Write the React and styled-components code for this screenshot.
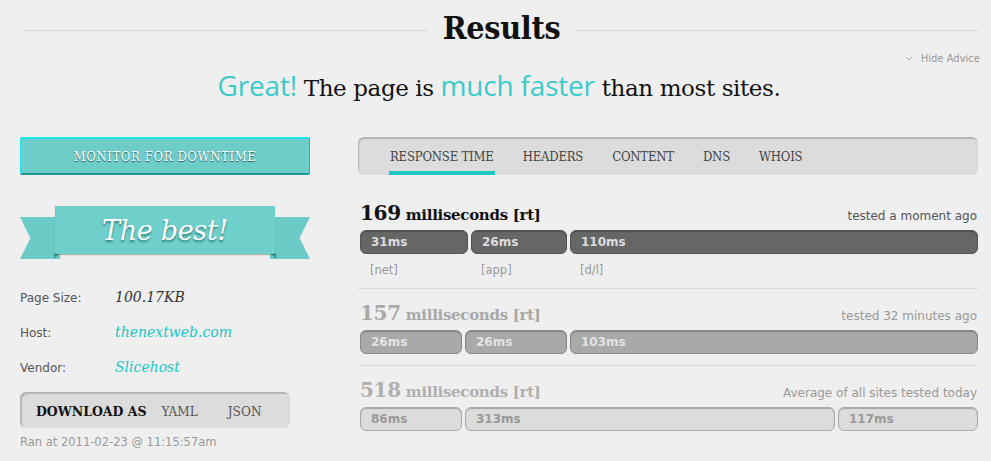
import React from 'react';
import styled, { createGlobalStyle } from 'styled-components';

const GlobalStyle = createGlobalStyle`
  html, body {
    margin: 0;
    padding: 0;
    background: #efefef;
  }
  body {
    font-family: "DejaVu Sans", "Liberation Sans", sans-serif;
    color: #555;
  }
`;

const Page = styled.div`
  width: 991px;
  height: 461px;
  overflow: hidden;
  box-sizing: border-box;
  padding: 0 13px 0 20px;
  background: #efefef;
`;

const TitleRow = styled.div`
  display: flex;
  align-items: center;
  gap: 16px;
  height: 50px;
  padding: 5px 0 0 5px;
  box-sizing: border-box;
`;

const Rule = styled.div`
  flex: 1;
  height: 1px;
  background: #d6d6d6;
  margin-top: 6px;
`;

const Title = styled.h1`
  margin: 0;
  font-family: "DejaVu Serif Condensed", "DejaVu Serif", serif;
  font-weight: bold;
  font-size: 32px;
  color: #111;
  letter-spacing: -0.3px;
`;

const AdviceRow = styled.div`
  display: flex;
  justify-content: flex-end;
  align-items: center;
  gap: 8px;
  height: 14px;
  margin-top: 1px;
  font-size: 10px;
  color: #999;
  margin-right: -2px;
`;

const Tagline = styled.p`
  margin: 2px 0 0;
  line-height: 36px;
  text-align: center;
  font-family: "DejaVu Serif", Georgia, serif;
  font-size: 23px;
  color: #111;
  letter-spacing: -0.4px;
`;

const Accent = styled.span`
  font-family: "Open Sans", "Lato", sans-serif;
  font-size: 28px;
  color: #3ccaca;
  letter-spacing: -0.2px;
`;

const Columns = styled.div`
  display: flex;
  gap: 48px;
  margin-top: 31px;
`;

const Side = styled.div`
  width: 290px;
  display: flex;
  flex-direction: column;
`;

const MonitorButton = styled.button`
  height: 38px;
  width: 100%;
  background: #6fcdc9;
  border: 1px solid #2ab3b0;
  border-top: 2px solid #1de6e6;
  border-left-color: #1de6e6;
  border-bottom: 2px solid #1b9896;
  border-radius: 2px;
  color: #fff;
  font-family: "DejaVu Serif Condensed", "DejaVu Serif", serif;
  font-size: 13px;
  letter-spacing: 0.6px;
  text-shadow: 0 1px 1px rgba(0, 60, 60, 0.8);
  cursor: pointer;
`;

const Ribbon = styled.div`
  display: flex;
  margin-top: 31px;
  height: 54px;
`;

const Tail = styled.div`
  position: relative;
  width: 40px;
  height: 42px;
  margin-top: 11px;
  background: #6ccbc6;
  clip-path: ${p => p.$right
    ? 'polygon(0 0, 100% 0, 74% 50%, 100% 100%, 0 100%)'
    : 'polygon(0 0, 100% 0, 100% 100%, 0 100%, 26% 50%)'};
`;

const Fold = styled.div`
  position: absolute;
  bottom: 0;
  ${p => (p.$right ? 'left: 0;' : 'right: 0;')}
  width: 6px;
  height: 6px;
  background: #3d9a96;
  clip-path: ${p => p.$right
    ? 'polygon(0 0, 100% 0, 100% 100%)'
    : 'polygon(0 0, 100% 0, 0 100%)'};
`;

const Band = styled.div`
  flex: 1;
  height: 48px;
  margin: 0 -5px;
  z-index: 1;
  background: #6fcfca;
  box-shadow: 0 1px 1px rgba(0, 0, 0, 0.25);
  display: flex;
  align-items: center;
  justify-content: center;
  font-family: "DejaVu Serif", Georgia, serif;
  font-style: italic;
  font-size: 27px;
  color: #fff;
  text-shadow: 0 2px 2px rgba(0, 70, 70, 0.55);
  letter-spacing: -0.3px;
`;

const InfoList = styled.dl`
  margin: 27px 0 0;
  display: grid;
  grid-template-columns: 95px 1fr;
  row-gap: 13px;
  align-items: baseline;
`;

const Label = styled.dt`
  font-size: 12px;
  color: #555;
  line-height: 21px;
`;

const Value = styled.dd`
  margin: 0;
  font-family: "DejaVu Serif", Georgia, serif;
  font-style: italic;
  font-size: 14px;
  line-height: 21px;
  color: ${p => (p.$link ? '#1cc6c6' : '#333')};
`;

const DownloadBar = styled.div`
  margin-top: 13px;
  height: 36px;
  width: 270px;
  box-sizing: border-box;
  background: #dcdcdc;
  border-radius: 6px;
  box-shadow: inset 2px 2px 1px rgba(0, 0, 0, 0.18);
  display: flex;
  align-items: center;
  padding: 2px 16px 0;
  white-space: nowrap;
  font-family: "DejaVu Serif Condensed", "DejaVu Serif", serif;
  font-size: 13.5px;
`;

const DownloadLabel = styled.span`
  font-family: "DejaVu Serif", serif;
  font-weight: bold;
  color: #111;
  font-size: 12.5px;
  margin-right: 15px;
`;

const Format = styled.span`
  color: #555;
  margin-right: 30px;
`;

const RanAt = styled.div`
  margin-top: 7px;
  font-size: 11.5px;
  color: #999;
`;

const Main = styled.div`
  flex: 1;
  display: flex;
  flex-direction: column;
`;

const TabBar = styled.div`
  height: 38px;
  box-sizing: border-box;
  background: #dcdcdc;
  border-radius: 6px;
  box-shadow: inset 1px 2px 1px rgba(0, 0, 0, 0.18);
  display: flex;
  align-items: stretch;
  padding: 0 31px;
  gap: 27px;
`;

const Tab = styled.div`
  display: flex;
  align-items: center;
  font-family: "DejaVu Serif Condensed", "DejaVu Serif", serif;
  font-size: 13px;
  color: #444;
  padding: 4px 1px 0;
  border-bottom: 4px solid ${p => (p.$active ? '#1dc8c6' : 'transparent')};
  letter-spacing: -0.2px;
`;

const Result = styled.div`
  padding: ${p => (p.$first ? '26px' : '12px')} 0 11px 2px;
  border-bottom: ${p => (p.$last ? 'none' : '1px solid #dadada')};
  color: ${p => p.$tone};
`;

const ResultHead = styled.div`
  display: flex;
  justify-content: space-between;
  align-items: baseline;
  margin-bottom: 5px;
`;

const Ms = styled.div`
  font-family: "DejaVu Serif", Georgia, serif;
  font-weight: bold;
  font-size: 15px;
  letter-spacing: -0.3px;
`;

const MsNum = styled.span`
  font-size: 20px;
`;

const When = styled.span`
  font-size: 12px;
  color: ${p => p.$color};
  margin-right: 1px;
`;

const Bars = styled.div`
  display: flex;
  gap: 3px;
`;

const Segment = styled.div`
  flex: ${p => p.$grow} 1 0;
  min-width: 0;
  height: 24px;
  box-sizing: border-box;
  border-radius: 6px;
  background: ${p => p.$bg};
  border: 1px solid ${p => p.$border};
  box-shadow: inset 0 1px 1px rgba(0, 0, 0, 0.25);
  color: ${p => p.$color};
  font-weight: bold;
  font-size: 12px;
  display: flex;
  align-items: center;
  padding-left: 10px;
`;

const Legend = styled.div`
  display: flex;
  gap: 3px;
  margin-top: 9px;
`;

const LegendItem = styled.span`
  flex: ${p => p.$grow} 1 0;
  font-size: 11.5px;
  color: #999;
  padding-left: 10px;
`;

const Chevron = () => (
  <svg width="8" height="5" viewBox="0 0 8 5">
    <path d="M1 1 L4 4 L7 1" fill="none" stroke="#aaa" strokeWidth="1" />
  </svg>
);

const results = [
  {
    ms: 169, when: 'tested a moment ago', tone: '#111', whenColor: '#555',
    bg: '#666', border: '#555', text: '#ddd',
    segs: [['31ms', 108], ['26ms', 96], ['110ms', 408]],
    legend: ['[net]', '[app]', '[d/l]'],
  },
  {
    ms: 157, when: 'tested 32 minutes ago', tone: '#a8a8a8', whenColor: '#999',
    bg: '#a9a9a9', border: '#8a8a8a', text: '#e4e4e4',
    segs: [['26ms', 102], ['26ms', 102], ['103ms', 408]],
  },
  {
    ms: 518, when: 'Average of all sites tested today', tone: '#b0b0b0', whenColor: '#999',
    bg: '#dcdcdc', border: '#aaa', text: '#999',
    segs: [['86ms', 102], ['313ms', 370], ['117ms', 140]],
  },
];

const tabs = ['RESPONSE TIME', 'HEADERS', 'CONTENT', 'DNS', 'WHOIS'];

export default function App() {
  return (
    <Page>
      <GlobalStyle />
      <TitleRow>
        <Rule />
        <Title>Results</Title>
        <Rule />
      </TitleRow>
      <AdviceRow><Chevron />Hide Advice</AdviceRow>
      <Tagline>
        <Accent>Great!</Accent> The page is <Accent>much faster</Accent> than most sites.
      </Tagline>

      <Columns>
        <Side>
          <MonitorButton>MONITOR FOR DOWNTIME</MonitorButton>
          <Ribbon>
            <Tail><Fold /></Tail>
            <Band>The best!</Band>
            <Tail $right><Fold $right /></Tail>
          </Ribbon>
          <InfoList>
            <Label>Page Size:</Label>
            <Value>100.17KB</Value>
            <Label>Host:</Label>
            <Value $link>thenextweb.com</Value>
            <Label>Vendor:</Label>
            <Value $link>Slicehost</Value>
          </InfoList>
          <DownloadBar>
            <DownloadLabel>DOWNLOAD AS</DownloadLabel>
            <Format>YAML</Format>
            <Format>JSON</Format>
          </DownloadBar>
          <RanAt>Ran at 2011-02-23 @ 11:15:57am</RanAt>
        </Side>

        <Main>
          <TabBar>
            {tabs.map((t, i) => <Tab key={t} $active={i === 0}>{t}</Tab>)}
          </TabBar>
          {results.map((r, i) => (
            <Result key={r.ms} $first={i === 0} $last={i === results.length - 1} $tone={r.tone}>
              <ResultHead>
                <Ms><MsNum>{r.ms}</MsNum> milliseconds [rt]</Ms>
                <When $color={r.whenColor}>{r.when}</When>
              </ResultHead>
              <Bars>
                {r.segs.map(([label, w], j) => (
                  <Segment key={j} $grow={w - 12} $bg={r.bg} $border={r.border} $color={r.text}>
                    {label}
                  </Segment>
                ))}
              </Bars>
              {r.legend && (
                <Legend>
                  {r.legend.map((l, j) => (
                    <LegendItem key={l} $grow={r.segs[j][1] - 10}>{l}</LegendItem>
                  ))}
                </Legend>
              )}
            </Result>
          ))}
        </Main>
      </Columns>
    </Page>
  );
}
